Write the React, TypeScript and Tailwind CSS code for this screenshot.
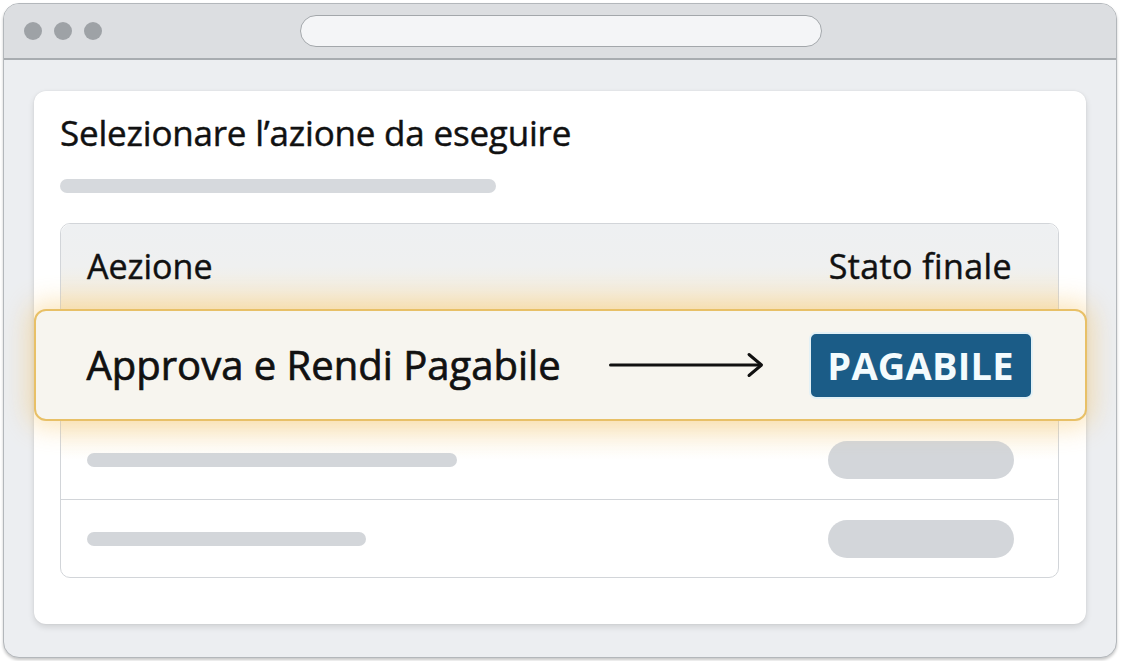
import React from "react";

const font = { fontFamily: '"Open Sans", "Noto Sans", sans-serif' };

export default function App() {
  return (
    <div className="w-[1122px] h-[661px] bg-white pl-[3px] pt-[3px]" style={font}>
      <div className="w-[1114px] h-[655px] rounded-[16px] border-[1.5px] border-[#b3b7bb] bg-[#eceef1] flex flex-col overflow-hidden shadow-[0_2px_3px_rgba(0,0,0,0.22)]">
        {/* title bar */}
        <div className="h-[56px] shrink-0 bg-[#dcdee1] border-b-[2px] border-[#a8acb0] flex items-center pl-[20px]">
          <div className="flex gap-[12px]">
            <div className="w-[18px] h-[18px] rounded-full bg-[#9ea2a6]" />
            <div className="w-[18px] h-[18px] rounded-full bg-[#9ea2a6]" />
            <div className="w-[18px] h-[18px] rounded-full bg-[#9ea2a6]" />
          </div>
          <div className="ml-[198px] w-[522px] h-[32px] rounded-full bg-[#f4f5f7] border-[1.5px] border-[#a3a7ab]" />
        </div>
        {/* content */}
        <div className="flex-1 pl-[30px] pr-[30px] pt-[31px] pb-[33px]">
          <div className="h-full rounded-[12px] bg-white shadow-[0_3px_6px_rgba(0,0,0,0.12),0_0_2px_rgba(0,0,0,0.08)] pl-[26px] pr-[27px] pt-[20px] flex flex-col">
            <div className="text-[35px] leading-[44px] text-[#111] tracking-[-0.2px] [-webkit-text-stroke:0.45px_#111]">
              Selezionare l’azione da eseguire
            </div>
            <div className="mt-[24px] w-[436px] h-[14px] rounded-full bg-[#d6d9dd]" />
            <div className="mt-[30px] rounded-[10px] border-[1.5px] border-[#d2d5d9] flex flex-col">
              <div className="h-[85px] rounded-t-[10px] bg-gradient-to-b from-[#eef0f2] via-[#eff0f0] to-[#f7ecd6] flex items-center justify-between pl-[26px] pr-[46px] text-[34px] text-[#111] [-webkit-text-stroke:0.45px_#111]">
                <span>Aezione</span>
                <span className="tracking-[0.4px]">Stato finale</span>
              </div>
              <div className="relative z-10 -ml-[27.5px] -mr-[28.5px] h-[112px] rounded-[12px] bg-[#f7f5ef] border-[2px] border-[#e8c067] shadow-[0_0_26px_6px_rgba(247,196,100,0.45)] flex items-center pl-[51px] pr-[52px]">
                <span className="text-[40px] text-[#111] tracking-[0px] whitespace-nowrap [-webkit-text-stroke:0.7px_#111]">Approva e Rendi Pagabile</span>
                <svg className="ml-[48px] shrink-0" width="156" height="26" viewBox="0 0 156 26" fill="none">
                  <path d="M1.5 13 H151" stroke="#111" strokeWidth="3" strokeLinecap="round" />
                  <path d="M140 2.5 L152.5 13 L140 23.5" stroke="#111" strokeWidth="3" strokeLinecap="round" strokeLinejoin="round" />
                </svg>
                <div className="ml-auto shrink-0 w-[224px] h-[67px] rounded-[7px] bg-[#1b5c87] border-[2px] border-[#e3f1f6] flex items-center justify-center text-[#f4fbfd] text-[38px] font-bold tracking-[0.2px]">
                  PAGABILE
                </div>
              </div>
              <div className="h-[79px] bg-gradient-to-b from-[#fbf3e2] via-white to-white flex items-center justify-between pl-[26px] pr-[44px] border-b-[1.5px] border-[#d2d5d9]">
                <div className="w-[370px] h-[14px] rounded-full bg-[#d3d6da]" />
                <div className="w-[186px] h-[38px] rounded-full bg-[#d3d6da]" />
              </div>
              <div className="h-[77px] flex items-center justify-between pl-[26px] pr-[44px]">
                <div className="w-[279px] h-[14px] rounded-full bg-[#d3d6da]" />
                <div className="w-[186px] h-[38px] rounded-full bg-[#d3d6da]" />
              </div>
            </div>
          </div>
        </div>
      </div>
    </div>
  );
}
